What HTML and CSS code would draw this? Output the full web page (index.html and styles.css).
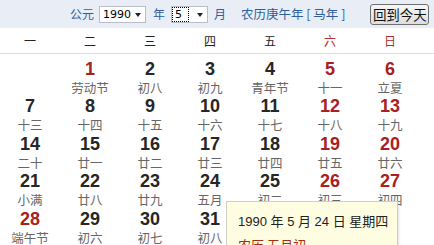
FILE: index.html
```html
<!DOCTYPE html>
<html lang="zh-CN">
<head>
<meta charset="utf-8">
<link rel="stylesheet" href="styles.css">
</head>
<body>
<div class="cal">
  <div class="bar">
    <span class="lbl l-gy">公元</span>
    <div class="sel sel-year"><span class="val">1990</span><span class="arrow"></span></div>
    <span class="lbl l-yr">年</span>
    <div class="sel sel-mon"><span class="val focus">5</span><span class="arrow"></span></div>
    <span class="lbl l-mo">月</span>
    <span class="lbl l-lunar">农历庚午年 [ 马年 ]</span>
    <button class="today">回到今天</button>
  </div>
  <div class="week">
    <span>一</span><span>二</span><span>三</span><span>四</span><span>五</span><span class="red">六</span><span class="red">日</span>
  </div>
  <div class="days">
    <div class="day"></div>
    <div class="day"><b class="red">1</b><i>劳动节</i></div>
    <div class="day"><b>2</b><i>初八</i></div>
    <div class="day"><b>3</b><i>初九</i></div>
    <div class="day"><b>4</b><i>青年节</i></div>
    <div class="day"><b class="red">5</b><i>十一</i></div>
    <div class="day"><b class="red">6</b><i>立夏</i></div>

    <div class="day"><b>7</b><i>十三</i></div>
    <div class="day"><b>8</b><i>十四</i></div>
    <div class="day"><b>9</b><i>十五</i></div>
    <div class="day"><b>10</b><i>十六</i></div>
    <div class="day"><b>11</b><i>十七</i></div>
    <div class="day"><b class="red">12</b><i>十八</i></div>
    <div class="day"><b class="red">13</b><i>十九</i></div>

    <div class="day"><b>14</b><i>二十</i></div>
    <div class="day"><b>15</b><i>廿一</i></div>
    <div class="day"><b>16</b><i>廿二</i></div>
    <div class="day"><b>17</b><i>廿三</i></div>
    <div class="day"><b>18</b><i>廿四</i></div>
    <div class="day"><b class="red">19</b><i>廿五</i></div>
    <div class="day"><b class="red">20</b><i>廿六</i></div>

    <div class="day"><b>21</b><i>小满</i></div>
    <div class="day"><b>22</b><i>廿八</i></div>
    <div class="day"><b>23</b><i>廿九</i></div>
    <div class="day"><b>24</b><i>五月</i></div>
    <div class="day"><b>25</b><i>初二</i></div>
    <div class="day"><b class="red">26</b><i>初三</i></div>
    <div class="day"><b class="red">27</b><i>初四</i></div>

    <div class="day"><b class="red">28</b><i>端午节</i></div>
    <div class="day"><b>29</b><i>初六</i></div>
    <div class="day"><b>30</b><i>初七</i></div>
    <div class="day"><b>31</b><i>初八</i></div>
  </div>
  <div class="tip">
    <div class="tip-date">1990 年 5 月 24 日 星期四</div>
    <div class="tip-lunar">农历 五月初一</div>
  </div>
</div>
</body>
</html>
```

FILE: styles.css
```css
html, body {
  margin: 0;
  padding: 0;
  background: #fff;
}
body {
  width: 434px;
  height: 245px;
  overflow: hidden;
  font-family: "Liberation Sans", "Noto Sans CJK SC", sans-serif;
}
.cal {
  position: relative;
  width: 434px;
  height: 245px;
  overflow: hidden;
}
.bar {
  height: 28px;
  background: #e9eef6;
  display: flex;
  align-items: center;
  padding-left: 70px;
  box-sizing: border-box;
}
.lbl {
  font-family: "Noto Sans CJK SC", sans-serif;
  font-size: 12px;
  line-height: 14px;
  color: #2f5e9a;
  white-space: nowrap;
}
.l-gy { width: 29px; }
.l-yr { margin-left: 7px; width: 18px; }
.l-mo { margin-left: 6px; }
.l-lunar { margin-left: 15px; font-size: 12.5px; }
.sel {
  height: 17px;
  box-sizing: border-box;
  border: 1px solid #b7bec8;
  background: #fff;
  display: flex;
  align-items: center;
  position: relative;
}
.sel-year { width: 47px; }
.sel-mon { width: 37px; }
.val {
  font-family: "DejaVu Sans", sans-serif;
  font-size: 11px;
  line-height: 13px;
  color: #000;
  padding-left: 3px;
}
.val.focus {
  margin-left: 1px;
  padding: 0 6px 0 2px;
  outline: 1px dotted #000;
}
.arrow {
  position: absolute;
  right: 4px;
  top: 6px;
  width: 0;
  height: 0;
  border-left: 3px solid transparent;
  border-right: 3px solid transparent;
  border-top: 4px solid #222;
}
.today {
  margin-left: 25px;
  width: 59px;
  height: 21px;
  padding: 0;
  border: 1px solid #6f6f6f;
  border-radius: 3px;
  background: linear-gradient(#f6f6f6, #dedede);
  font-family: "Noto Sans CJK SC", sans-serif;
  font-size: 13.5px;
  line-height: 19px;
  color: #111;
}
.week {
  display: grid;
  grid-template-columns: repeat(7, 60px);
  height: 25px;
  border-bottom: 1px solid #dcdcdc;
  width: 434px;
}
.week span {
  font-family: "Noto Sans CJK SC", sans-serif;
  font-size: 12px;
  line-height: 25px;
  text-align: center;
  color: #222;
}
.days {
  display: grid;
  grid-template-columns: repeat(7, 60px);
  padding-top: 4.5px;
}
.day {
  height: 37.5px;
  display: flex;
  flex-direction: column;
  align-items: center;
}
.day b {
  font-family: "Liberation Sans", sans-serif;
  font-weight: bold;
  font-size: 18px;
  line-height: 20px;
  color: #262626;
}
.day i {
  font-style: normal;
  font-family: "Noto Sans CJK SC", sans-serif;
  font-size: 12.5px;
  line-height: 17.5px;
  color: #666;
}
.week span.red { color: #b02a2a; }
.day b.red { color: #a8201f; }
.tip {
  position: absolute;
  left: 226px;
  top: 201px;
  width: 172px;
  height: 44px;
  box-sizing: border-box;
  background: #fffde1;
  border: 1px solid #cfcfc4;
  border-bottom: 0;
  box-shadow: 1px 1px 2px rgba(0,0,0,0.12);
  padding: 12px 0 0 11px;
  overflow: hidden;
}
.tip-date {
  font-family: "Liberation Sans", "Noto Sans CJK SC", sans-serif;
  font-size: 13px;
  line-height: 16px;
  color: #222;
  white-space: nowrap;
}
.tip-lunar {
  margin-top: 7px;
  font-family: "Noto Sans CJK SC", sans-serif;
  font-size: 13px;
  line-height: 16px;
  color: #a0300c;
}
```
